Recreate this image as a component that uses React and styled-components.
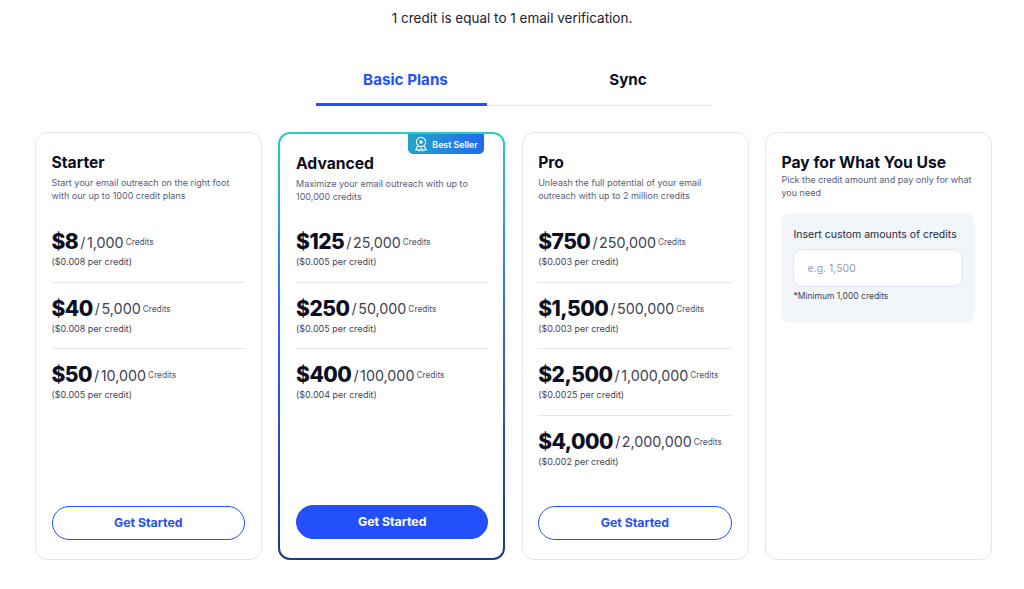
import React from 'react'
import styled, { createGlobalStyle } from 'styled-components'

const GlobalStyle = createGlobalStyle`
  html, body {
    margin: 0;
    padding: 0;
    background: #fff;
    overflow: hidden;
  }
  * {
    box-sizing: border-box;
  }
  body {
    font-family: Inter, "Noto Sans", "Liberation Sans", sans-serif;
    color: #0b0f1f;
  }
`

const Page = styled.div`
  width: 1024px;
  height: 589px;
  padding-top: 9px;
  display: flex;
  flex-direction: column;
  align-items: center;
`

const Intro = styled.p`
  margin: 0;
  font-size: 13.5px;
  line-height: 18px;
  color: #1c2130;
`

const Tabs = styled.div`
  align-self: flex-start;
  display: flex;
  width: 395px;
  height: 60px;
  margin: 19px 0 26px 316px;
  border-bottom: 1px solid #e1e5ef;
`

const Tab = styled.div`
  width: ${(p) => (p.$active ? '171px' : '224px')};
  height: 60px;
  padding: 24px 0 0 ${(p) => (p.$active ? '8px' : '58px')};
  text-align: center;
  font-size: 15.2px;
  line-height: 20px;
  font-weight: 700;
  color: ${(p) => (p.$active ? '#2450fb' : '#0b0f1f')};
  border-bottom: ${(p) => (p.$active ? '3px solid #2450fb' : 'none')};
`

const Cards = styled.div`
  align-self: flex-start;
  margin-left: 35px;
  display: grid;
  grid-template-columns: repeat(4, 227px);
  gap: 16.33px;
  width: 957px;
  height: 428px;
`

const Card = styled.div`
  position: relative;
  display: flex;
  flex-direction: column;
  padding: 20px ${(p) => (p.$featured ? '15px 19px 15.7px' : '16px 19px 15.5px')};
  border-radius: 12px;
  border: ${(p) => (p.$featured ? '2px' : '1px')} solid ${(p) => (p.$featured ? 'transparent' : '#e3e7f1')};
  ${(p) =>
    p.$featured &&
    'background: linear-gradient(#fff, #fff) padding-box, linear-gradient(180deg, #25cfc7 0%, #2f62f0 45%, #1b3a86 100%) border-box;'}
`

const Badge = styled.div`
  position: absolute;
  top: 0;
  right: 19px;
  height: 20px;
  width: 76px;
  display: flex;
  align-items: center;
  gap: 4px;
  padding-left: 6px;
  border-radius: 0 0 5px 5px;
  background: linear-gradient(90deg, #22a6c6, #2468ee);
  color: #fff;
  font-size: 8.8px;
  font-weight: 600;
  white-space: nowrap;
`

const Title = styled.h2`
  margin: 0;
  font-size: 15.7px;
  line-height: 19px;
  font-weight: 700;
  color: #0b0f1f;
`

const Description = styled.p`
  margin: ${(p) => (p.$tight ? '1px' : '4px')} 0 0;
  height: 27px;
  font-size: 9px;
  line-height: 13px;
  color: #555e7c;
`

const PriceList = styled.div`
  margin-top: ${(p) => (p.$featured ? '12px' : '13px')};
`

const PriceRow = styled.div`
  height: 66.67px;
  padding-top: 14px;
  border-bottom: ${(p) => (p.$last ? 'none' : '1px solid #e3e7f1')};
`

const PriceLine = styled.div`
  display: flex;
  align-items: center;
  height: 24px;
  white-space: nowrap;
`

const Amount = styled.span`
  font-size: 21px;
  line-height: 24px;
  font-weight: 800;
  letter-spacing: -0.5px;
  color: #0b0f1f;
`

const Quantity = styled.span`
  margin-left: 2px;
  font-size: 14.3px;
  word-spacing: -2.5px;
  color: #3c4254;
`

const Unit = styled.span`
  margin-left: 2px;
  font-size: 8.3px;
  color: #4d5468;
`

const PerCredit = styled.div`
  margin-top: 1px;
  font-size: 9px;
  line-height: 13px;
  color: #3f4558;
`

const CtaButton = styled.button`
  margin-top: auto;
  width: 100%;
  height: 34px;
  padding: 0 0 1px;
  border-radius: 17px;
  border: 1px solid #2450fb;
  background: ${(p) => (p.$solid ? '#2450fb' : '#fff')};
  color: ${(p) => (p.$solid ? '#fff' : '#2450fb')};
  font-family: inherit;
  font-size: 12.3px;
  font-weight: 700;
`

const CustomBox = styled.div`
  margin-top: 13px;
  padding: 15px 12px 13px;
  height: 110px;
  border-radius: 10px;
  background: #f2f5f9;
`

const CustomLabel = styled.label`
  display: block;
  font-size: 10.5px;
  line-height: 14px;
  color: #23283a;
`

const CustomInput = styled.input`
  display: block;
  width: 100%;
  height: 38px;
  margin-top: 7px;
  padding: 0 13px;
  border: 1px solid #dfe4f0;
  border-radius: 10px;
  background: #fff;
  font-family: inherit;
  font-size: 10.5px;
  outline: none;
  &::placeholder {
    color: #969cab;
    opacity: 1;
  }
`

const CustomHint = styled.div`
  margin-top: 3px;
  font-size: 8.5px;
  line-height: 12px;
  color: #3f4558;
`

const RibbonIcon = () => (
  <svg width="14" height="16" viewBox="0 0 14 16" fill="none" stroke="#fff" strokeWidth="1.1">
    <circle cx="7" cy="6" r="4.6" />
    <circle cx="7" cy="6" r="1.8" fill="#fff" stroke="none" />
    <path d="M3.6 10 1.8 14l2.4-.4L5.6 15 7 12.2 8.4 15l1.4-1.4 2.4.4-1.8-4" strokeLinejoin="round" />
  </svg>
)

const plans = [
  {
    name: 'Starter',
    description: 'Start your email outreach on the right foot with our up to 1000 credit plans',
    prices: [
      ['$8', '1,000', '$0.008'],
      ['$40', '5,000', '$0.008'],
      ['$50', '10,000', '$0.005'],
    ],
  },
  {
    name: 'Advanced',
    featured: true,
    description: 'Maximize your email outreach with up to 100,000 credits',
    prices: [
      ['$125', '25,000', '$0.005'],
      ['$250', '50,000', '$0.005'],
      ['$400', '100,000', '$0.004'],
    ],
  },
  {
    name: 'Pro',
    description: 'Unleash the full potential of your email outreach with up to 2 million credits',
    prices: [
      ['$750', '250,000', '$0.003'],
      ['$1,500', '500,000', '$0.003'],
      ['$2,500', '1,000,000', '$0.0025'],
      ['$4,000', '2,000,000', '$0.002'],
    ],
  },
]

export default function App() {
  return (
    <Page>
      <GlobalStyle />
      <Intro>1 credit is equal to 1 email verification.</Intro>
      <Tabs>
        <Tab $active>Basic Plans</Tab>
        <Tab>Sync</Tab>
      </Tabs>
      <Cards>
        {plans.map((plan) => (
          <Card key={plan.name} $featured={plan.featured}>
            {plan.featured && (
              <Badge>
                <RibbonIcon />
                Best Seller
              </Badge>
            )}
            <Title>{plan.name}</Title>
            <Description>{plan.description}</Description>
            <PriceList $featured={plan.featured}>
              {plan.prices.map(([amount, quantity, rate], i) => (
                <PriceRow key={amount} $last={i === plan.prices.length - 1}>
                  <PriceLine>
                    <Amount>{amount}</Amount>
                    <Quantity>/ {quantity}</Quantity>
                    <Unit>Credits</Unit>
                  </PriceLine>
                  <PerCredit>({rate} per credit)</PerCredit>
                </PriceRow>
              ))}
            </PriceList>
            <CtaButton $solid={plan.featured}>Get Started</CtaButton>
          </Card>
        ))}
        <Card>
          <Title>Pay for What You Use</Title>
          <Description $tight>Pick the credit amount and pay only for what you need</Description>
          <CustomBox>
            <CustomLabel>Insert custom amounts of credits</CustomLabel>
            <CustomInput placeholder="e.g. 1,500" />
            <CustomHint>*Minimum 1,000 credits</CustomHint>
          </CustomBox>
        </Card>
      </Cards>
    </Page>
  )
}
